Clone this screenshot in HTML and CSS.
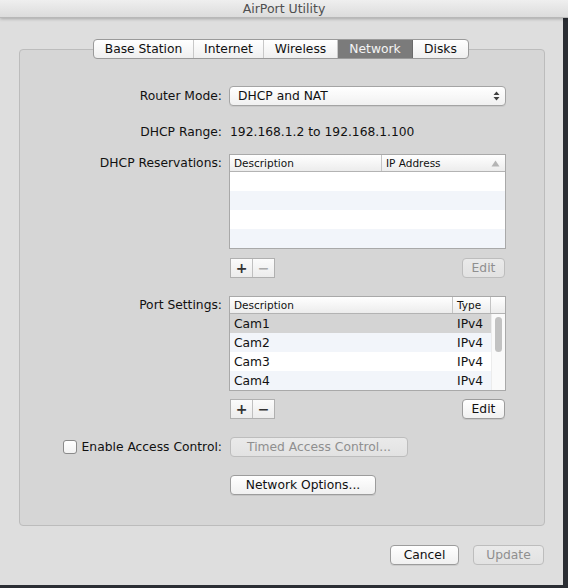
FILE: index.html
```html
<!DOCTYPE html>
<html>
<head>
<meta charset="utf-8">
<link rel="stylesheet" href="styles.css">
</head>
<body>
<div class="titlebar">AirPort Utility</div>
<div class="main">
  <div class="group">
    <div class="tabs">
      <div class="tab t1">Base Station</div>
      <div class="tab t2">Internet</div>
      <div class="tab t3">Wireless</div>
      <div class="tab t4 active">Network</div>
      <div class="tab t5">Disks</div>
    </div>

    <div class="row r-mode">
      <div class="label">Router Mode:</div>
      <div class="popup"><span>DHCP and NAT</span>
        <svg class="updown" width="7" height="10" viewBox="0 0 7 10"><path d="M3.5 0.5 L6.5 4 L0.5 4 Z M3.5 9.5 L6.5 6 L0.5 6 Z" fill="#404040"/></svg>
      </div>
    </div>

    <div class="row r-range">
      <div class="label">DHCP Range:</div>
      <div class="value">192.168.1.2 to 192.168.1.100</div>
    </div>

    <div class="row r-res">
      <div class="label top">DHCP Reservations:</div>
      <div class="table">
        <div class="thead">
          <div class="th c-desc1">Description</div>
          <div class="th c-ip">IP Address
            <svg class="sort" width="9" height="7" viewBox="0 0 9 7"><path d="M4.5 0.5 L8.5 6.5 L0.5 6.5 Z" fill="#b4b4b4"/></svg>
          </div>
        </div>
        <div class="tr"></div>
        <div class="tr alt"></div>
        <div class="tr"></div>
        <div class="tr alt"></div>
      </div>
    </div>

    <div class="row r-btn1">
      <div class="label"></div>
      <div class="btnrow">
        <div class="seg"><div class="segb">+</div><div class="segb dis">−</div></div>
        <div class="btn small dis">Edit</div>
      </div>
    </div>

    <div class="row r-port">
      <div class="label top">Port Settings:</div>
      <div class="table">
        <div class="thead">
          <div class="th c-desc2">Description</div>
          <div class="th c-type">Type</div>
          <div class="th c-sb"></div>
        </div>
        <div class="pbody">
          <div class="prows">
            <div class="tr sel"><span class="nm">Cam1</span><span class="ty">IPv4</span></div>
            <div class="tr alt"><span class="nm">Cam2</span><span class="ty">IPv4</span></div>
            <div class="tr"><span class="nm">Cam3</span><span class="ty">IPv4</span></div>
            <div class="tr alt"><span class="nm">Cam4</span><span class="ty">IPv4</span></div>
          </div>
          <div class="scroll"><div class="thumb"></div></div>
        </div>
      </div>
    </div>

    <div class="row r-btn2">
      <div class="label"></div>
      <div class="btnrow">
        <div class="seg"><div class="segb">+</div><div class="segb">−</div></div>
        <div class="btn small">Edit</div>
      </div>
    </div>

    <div class="row r-access">
      <div class="label"><span class="check"></span>Enable Access Control:</div>
      <div class="btn timed dis">Timed Access Control...</div>
    </div>

    <div class="row r-opts">
      <div class="label"></div>
      <div class="btn opts">Network Options...</div>
    </div>
  </div>

  <div class="footer">
    <div class="btn fbtn cancel">Cancel</div>
    <div class="btn fbtn update dis">Update</div>
  </div>
</div>
</body>
</html>
```
FILE: styles.css
```css
html, body {
  margin: 0;
  padding: 0;
}
body {
  width: 568px;
  height: 588px;
  overflow: hidden;
  background: #2b2e34;
  font-family: "DejaVu Sans", "Liberation Sans", sans-serif;
  font-size: 12.3px;
  color: #111;
}
.titlebar {
  height: 17px;
  width: 568px;
  background: linear-gradient(#efefef, #dcdcdc);
  border-bottom: 1px solid #b8b8b8;
  box-shadow: 0 1px 3px rgba(0,0,0,0.25);
  text-align: center;
  font-size: 12.5px;
  line-height: 17px;
  color: #4f4f4f;
  position: relative;
  z-index: 2;
}
.main {
  width: 563px;
  height: 567px;
  background: #dedede;
  display: flex;
  flex-direction: column;
}
.group {
  margin: 31px 0 0 19px;
  width: 524px;
  height: 475px;
  border: 1px solid #bcbcbc;
  border-radius: 4px;
  background: #d6d6d6;
  display: flex;
  flex-direction: column;
}
.tabs {
  display: flex;
  align-self: flex-start;
  margin: -11px 0 0 73px;
  height: 18px;
  border: 1px solid #9a9a9a;
  border-radius: 4px;
  background: linear-gradient(#ffffff, #efefef);
  overflow: hidden;
}
.tab {
  box-sizing: border-box;
  height: 18px;
  line-height: 18px;
  text-align: center;
  white-space: nowrap;
  font-size: 12.3px;
  color: #111;
  border-right: 1px solid #c8c8c8;
}
.t1 { width: 100px; }
.t2 { width: 70px; }
.t3 { width: 74px; }
.t4 { width: 75px; }
.t5 { width: 55px; border-right: none; }
.tab.active {
  background: #7b7b7b;
  color: #f4f4f4;
  border-right: 1px solid #6a6a6a;
}

.row {
  display: flex;
}
.label {
  width: 201px;
  margin-left: 1px;
  text-align: right;
  margin-right: 7px;
  white-space: nowrap;
  line-height: 20px;
  flex-shrink: 0;
}
.label.top { line-height: 18px; }
.r-mode { margin-top: 27px; }
.r-range { margin-top: 16px; }
.r-res { margin-top: 12px; }
.r-btn1 { margin-top: 9px; }
.r-port { margin-top: 18px; }
.r-btn2 { margin-top: 8px; }
.r-access { margin-top: 18px; }
.r-opts { margin-top: 18px; }

.popup {
  width: 262px;
  height: 18px;
  padding: 0 5px 0 8px;
  border: 1px solid #a4a4a4;
  border-radius: 4px;
  background: linear-gradient(#ffffff, #f1f1f1);
  display: flex;
  align-items: center;
  justify-content: space-between;
  box-shadow: 0 1px 0 rgba(0,0,0,0.06);
}
.value { line-height: 20px; padding-left: 1px; }

.table {
  width: 275px;
  border: 1px solid #a9a9a9;
  background: #fff;
}
.thead {
  display: flex;
  height: 16px;
  background: linear-gradient(#ffffff, #ececec);
  border-bottom: 1px solid #b3b3b3;
  font-size: 10.5px;
  line-height: 16px;
}
.th {
  padding-left: 4px;
  box-sizing: border-box;
  position: relative;
}
.c-desc1 { width: 152px; border-right: 1px solid #c4c4c4; }
.c-ip { flex: 1; display: flex; justify-content: space-between; align-items: center; padding-right: 5px; }
.c-desc2 { width: 223px; border-right: 1px solid #c4c4c4; }
.c-type { width: 38px; border-right: 1px solid #c4c4c4; }
.c-sb { flex: 1; }
.tr {
  height: 19px;
  background: #fff;
}
.tr.alt { background: #f2f5fa; }
.tr.sel { background: #d4d4d4; }
.pbody { display: flex; }
.prows { width: 261px; }
.prows .tr {
  display: flex;
  align-items: center;
  font-size: 12.3px;
}
.prows .nm { width: 223px; padding-left: 4px; box-sizing: border-box; }
.prows .ty { padding-left: 4px; }
.scroll {
  flex: 1;
  background: #fafafa;
  border-left: 1px solid #ececec;
}
.thumb {
  width: 7px;
  height: 35px;
  margin: 3px 0 0 3px;
  border-radius: 4px;
  background: #c2c2c2;
}

.btnrow {
  width: 277px;
  display: flex;
  justify-content: space-between;
  align-items: center;
}
.seg {
  display: flex;
  margin-left: 1px;
  border: 1px solid #b0b0b0;
  height: 18px;
  background: linear-gradient(#fbfbfb, #ececec);
}
.segb {
  width: 21px;
  text-align: center;
  line-height: 18px;
  font-size: 14px;
  font-weight: bold;
  color: #333;
}
.segb + .segb { border-left: 1px solid #c0c0c0; }
.segb.dis { color: #a9a9a9; }

.btn {
  height: 18px;
  line-height: 18px;
  border: 1px solid #9c9c9c;
  border-radius: 4px;
  background: linear-gradient(#ffffff, #f0f0f0);
  text-align: center;
  font-size: 12.3px;
  color: #111;
  box-shadow: 0 1px 0 rgba(0,0,0,0.08);
}
.btn.dis {
  color: #8f8f8f;
  border-color: #bdbdbd;
  background: linear-gradient(#eaeaea, #e2e2e2);
  box-shadow: none;
}
.btn.small { width: 41px; margin-right: 1px; }
.timed { width: 176px; margin-left: 1px; }
.opts { width: 144px; margin-left: 1px; }

.r-access .label {
  display: flex;
  align-items: center;
  justify-content: flex-end;
}
.check {
  width: 12px;
  height: 12px;
  border: 1px solid #8a8a8a;
  border-radius: 3px;
  background: linear-gradient(#ffffff, #f2f2f2);
  margin-right: 5px;
}

.footer {
  display: flex;
  justify-content: flex-end;
  gap: 14px;
  margin: 19px 19px 0 0;
}
.cancel { width: 67px; }
.update { width: 69px; }
```
